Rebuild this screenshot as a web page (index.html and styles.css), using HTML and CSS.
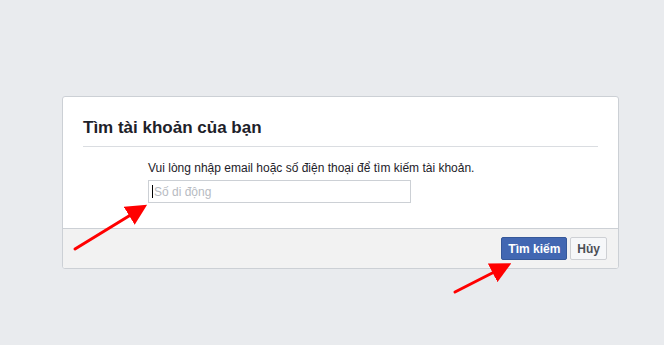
FILE: index.html
```html
<!DOCTYPE html>
<html lang="vi">
  <head>
    <meta charset="UTF-8" />
    <meta name="viewport" content="width=device-width, initial-scale=1.0"/>
    <title>Tìm tài khoản của bạn</title>
    <link rel="stylesheet" href="styles.css">
  </head>
  <body>
    <div class="card">
      <div class="card-header">
        <h2 class="title">Tìm tài khoản của bạn</h2>
      </div>
      <div class="card-body">
        <div class="hint">Vui lòng nhập email hoặc số điện thoại để tìm kiếm tài khoản.</div>
        <div class="field"><span class="caret"></span><input type="text" placeholder="Số di động"></div>
      </div>
      <div class="card-footer">
        <button class="btn btn-primary">Tìm kiếm</button>
        <button class="btn">Hủy</button>
      </div>
    </div>

    <!-- annotation arrows -->
    <svg class="arrows" width="664" height="345" viewBox="0 0 664 345">
      <defs>
        <marker id="head" markerWidth="7" markerHeight="7" refX="5" refY="3.5" orient="auto" markerUnits="strokeWidth">
          <path d="M0,0 L7,3.5 L0,7 Z" fill="#ff0000"/>
        </marker>
      </defs>
      <line x1="75" y1="249" x2="142" y2="208" stroke="#ff0000" stroke-width="3" stroke-linecap="round" marker-end="url(#head)"/>
      <line x1="455" y1="292" x2="506" y2="266" stroke="#ff0000" stroke-width="3" stroke-linecap="round" marker-end="url(#head)"/>
    </svg>
  </body>
</html>
```

FILE: styles.css
```css
* {
  box-sizing: border-box;
  margin: 0;
  padding: 0;
}

body {
  font-family: 'Liberation Sans', Arial, Helvetica, sans-serif;
  background: #e9ebee;
  min-height: 100vh;
  color: #1d2129;
  overflow: hidden;
}

.card {
  margin: 96px 0 0 62px;
  width: 557px;
  background: #fff;
  border: 1px solid #ccd0d5;
  border-radius: 3px;
  overflow: hidden;
}

.card-header {
  padding: 21px 20px 0;
}

.title {
  font-size: 17px;
  line-height: 20px;
  font-weight: bold;
  color: #1d2129;
  padding-bottom: 8px;
  border-bottom: 1px solid #dadde1;
}

.card-body {
  padding: 13px 0 25px 85px;
}

.hint {
  font-size: 12px;
  line-height: 16px;
  color: #1d2129;
  margin-bottom: 4px;
}

.field {
  position: relative;
  width: 263px;
  height: 23px;
}

.field input {
  width: 100%;
  height: 100%;
  border: 1px solid #ccd0d5;
  padding: 0 5px;
  font-family: inherit;
  font-size: 12px;
  color: #1d2129;
  outline: none;
}

.field input::placeholder {
  color: #b7bbc2;
}

.caret {
  position: absolute;
  left: 4px;
  top: 5px;
  width: 1px;
  height: 13px;
  background: #000;
}

.card-footer {
  display: flex;
  justify-content: flex-end;
  gap: 3px;
  padding: 8px 11px 8px;
  background: #f2f2f2;
  border-top: 1px solid #ccd0d5;
}

.btn {
  height: 23px;
  padding: 0 6px;
  font-family: inherit;
  font-size: 12px;
  font-weight: bold;
  white-space: nowrap;
  color: #4b4f56;
  background: #f6f7f9;
  border: 1px solid #ced0d4;
  border-radius: 2px;
}

.btn-primary {
  color: #fff;
  background: #4267b2;
  border-color: #365899;
}

.arrows {
  position: absolute;
  left: 0;
  top: 0;
  pointer-events: none;
}
```
